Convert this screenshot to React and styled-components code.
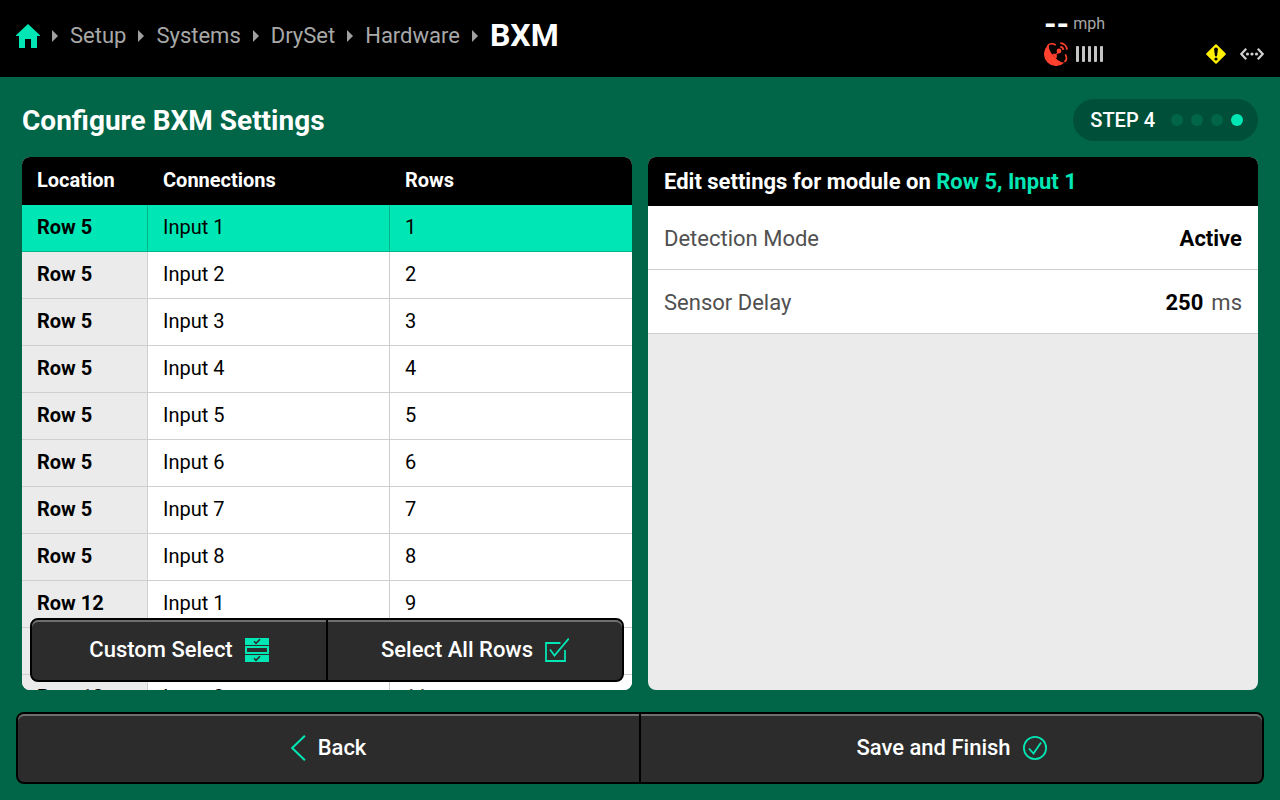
import React, { useState } from 'react'
import styled, { createGlobalStyle } from 'styled-components'

const accent = '#00e6b4'
const green = '#006647'

const crumbs = ['Setup', 'Systems', 'DrySet', 'Hardware']

const modules = [
  { location: 'Row 5', input: 'Input 1' },
  { location: 'Row 5', input: 'Input 2' },
  { location: 'Row 5', input: 'Input 3' },
  { location: 'Row 5', input: 'Input 4' },
  { location: 'Row 5', input: 'Input 5' },
  { location: 'Row 5', input: 'Input 6' },
  { location: 'Row 5', input: 'Input 7' },
  { location: 'Row 5', input: 'Input 8' },
  { location: 'Row 12', input: 'Input 1' },
  { location: 'Row 12', input: 'Input 2' },
  { location: 'Row 12', input: 'Input 3' },
]

const steps = [1, 2, 3, 4]

const HomeIcon = () => (
  <svg width="24" height="24" viewBox="0 0 24 24" fill={accent} aria-hidden="true">
    <path d="M12 0 24 11.2V12h-3v12h-6v-9H9v9H3V12H0v-.8z" />
  </svg>
)

const Separator = () => (
  <svg width="6" height="12" viewBox="0 0 6 12" fill="#a0a0a0" aria-hidden="true">
    <path d="M0 0 6 6 0 12z" />
  </svg>
)

const SatelliteIcon = () => (
  <svg width="24" height="24" viewBox="0 0 24 24" fill="none" stroke="#ff412d" aria-hidden="true">
    <path d="M3.500 3.500A12 12 0 0 0 20.500 20.500C14 20.500 4 9.700 5 3.500z" fill="#ff412d" stroke="none" />
    <path d="M3.600 4.200C5 1.300 8.300 1 11.800 3.100" strokeWidth="1.700" />
    <path d="M21.300 12.400c1.800 3.400 1.700 6-.9 7.400" strokeWidth="1.700" />
    <path d="M8.500 12.500 10 12l2.200.2L14.500 9l1 1-3 2.500v2.500l-.7 1.500z" fill="#ff412d" strokeWidth=".6" />
    <circle cx="15" cy="9" r="2.400" fill="#ff412d" stroke="none" />
    <path d="M16.300 4.800c1.700.1 2.900 1.300 3.100 3M16.300 1.100c3.600.1 6.400 2.900 6.700 6.500" strokeWidth="1.800" />
  </svg>
)

const SignalIcon = () => (
  <svg width="28" height="16" viewBox="0 0 28 16" fill="#c4c4c4" aria-hidden="true">
    {[0, 6, 12, 18, 24].map(x => (
      <rect key={x} x={x} width="3" height="16" rx="1" />
    ))}
  </svg>
)

const WarningIcon = () => (
  <svg width="20" height="20" viewBox="0 0 20 20" aria-hidden="true">
    <path d="M9.300.5Q10-.2 10.700.5L19.500 9.300q.7.700 0 1.400L10.700 19.500q-.7.700-1.400 0L.5 10.700q-.7-.7 0-1.400z" fill="#fff000" />
    <path d="M8.100 5.300a1.900 1.900 0 0 1 3.800 0L11 12.300H9z" fill="#000" />
    <circle cx="10" cy="15" r="1.600" fill="#000" />
  </svg>
)

const ConnectionIcon = () => (
  <svg width="24" height="12" viewBox="0 0 24 12" fill="none" aria-hidden="true">
    <path d="M6.200.8 1.300 6l4.900 5.200M17.800.8 22.700 6l-4.900 5.200" stroke="#d0d0d0" strokeWidth="2.200" />
    <g fill="#d0d0d0">
      <circle cx="7.500" cy="6" r="1.600" />
      <circle cx="12" cy="6" r="1.600" />
      <circle cx="16.500" cy="6" r="1.600" />
    </g>
  </svg>
)

const CustomSelectIcon = () => (
  <svg width="24" height="24" viewBox="0 0 24 24" fill="none" aria-hidden="true">
    <path d="M0 0h24v7H0zM0 17h24v7H0z" fill={accent} />
    <path d="M1 9h22v6H1z" stroke={accent} strokeWidth="2" />
    <path d="m9 3.300 2 2 4-4M9 20.300l2 2 4-4" stroke="#2c2c2c" strokeWidth="1.600" />
  </svg>
)

const SelectAllIcon = () => (
  <svg width="24" height="24" viewBox="0 0 24 24" fill="none" stroke={accent} strokeWidth="1.800" aria-hidden="true">
    <path d="M15.500 5H1v18h19V12" />
    <path d="m5 11.500 4.500 6L23.800.5" />
  </svg>
)

const BackIcon = () => (
  <svg width="15" height="26" viewBox="0 0 15 26" fill="none" stroke={accent} strokeWidth="2" aria-hidden="true">
    <path d="M13.900.7 1.200 13l12.700 12.300" />
  </svg>
)

const FinishIcon = () => (
  <svg width="24" height="24" viewBox="0 0 24 24" fill="none" stroke={accent} aria-hidden="true">
    <circle cx="12" cy="12" r="11.100" strokeWidth="1.800" />
    <path d="m6 12.500 4.500 5 7.500-11" strokeWidth="1.800" />
  </svg>
)

function App() {
  const [selected, setSelected] = useState([0])
  const current = modules[selected[0]]

  return (
    <Screen>
      <GlobalStyle />
      <TopBar>
        <Breadcrumbs aria-label="Breadcrumb">
          <Crumb href="#home" aria-label="Home">
            <HomeIcon />
          </Crumb>
          {crumbs.map(name => (
            <React.Fragment key={name}>
              <Separator />
              <Crumb href={'#' + name.toLowerCase()}>{name}</Crumb>
            </React.Fragment>
          ))}
          <Separator />
          <PageName>BXM</PageName>
        </Breadcrumbs>
        <Status>
          <Gauges>
            <Speed>
              <SpeedValue>--</SpeedValue>
              <SpeedUnit>mph</SpeedUnit>
            </Speed>
            <IconRow $gap="8px">
              <SatelliteIcon />
              <SignalIcon />
            </IconRow>
          </Gauges>
          <IconRow $gap="14px">
            <WarningIcon />
            <ConnectionIcon />
          </IconRow>
        </Status>
      </TopBar>

      <Heading>
        <Title>Configure BXM Settings</Title>
        <StepPill>
          STEP 4
          <Dots>
            {steps.map(n => (
              <Dot key={n} $active={n === 4} />
            ))}
          </Dots>
        </StepPill>
      </Heading>

      <Panels>
        <Panel>
          <TableScroll>
            <Table>
              <thead>
                <tr>
                  <HeadCell $width="126px">Location</HeadCell>
                  <HeadCell>Connections</HeadCell>
                  <HeadCell>Rows</HeadCell>
                </tr>
              </thead>
              <tbody>
                {modules.map((m, i) => (
                  <Row key={i} $selected={selected.includes(i)} onClick={() => setSelected([i])}>
                    <RowHead scope="row">{m.location}</RowHead>
                    <Cell>{m.input}</Cell>
                    <Cell>{i + 1}</Cell>
                  </Row>
                ))}
              </tbody>
            </Table>
          </TableScroll>
          <FloatingGroup>
            <BarButton type="button">
              <Label>Custom Select</Label>
              <CustomSelectIcon />
            </BarButton>
            <BarButton type="button" onClick={() => setSelected(modules.map((m, i) => i))}>
              <Label>Select All Rows</Label>
              <SelectAllIcon />
            </BarButton>
          </FloatingGroup>
        </Panel>

        <Panel>
          <PanelHead>
            Edit settings for module on{' '}
            <Highlight>
              {current.location}, {current.input}
            </Highlight>
          </PanelHead>
          <Setting type="button">
            Detection Mode
            <SettingValue>
              <Value>Active</Value>
            </SettingValue>
          </Setting>
          <Setting type="button">
            Sensor Delay
            <SettingValue>
              <Value>250</Value>
              ms
            </SettingValue>
          </Setting>
        </Panel>
      </Panels>

      <Footer>
        <ButtonGroup $height="72px">
          <BarButton type="button">
            <BackIcon />
            <Label>Back</Label>
          </BarButton>
          <BarButton type="button">
            <Label>Save and Finish</Label>
            <FinishIcon />
          </BarButton>
        </ButtonGroup>
      </Footer>
    </Screen>
  )
}

export default App

const GlobalStyle = createGlobalStyle`
  * {
    box-sizing: border-box;
  }
  body {
    margin: 0;
    background: ${green};
    font-family: Roboto, "Liberation Sans", sans-serif;
  }
  svg {
    display: block;
    flex: none;
  }
`
const Screen = styled.div`
  display: flex;
  flex-direction: column;
  height: 100vh;
  background: ${green};
`
const TopBar = styled.header`
  display: flex;
  justify-content: space-between;
  padding: 12px 16px 11px;
  background: #000;
`
const Breadcrumbs = styled.nav`
  display: flex;
  align-items: center;
  gap: 12px;
  height: 48px;
`
const Crumb = styled.a`
  color: #a8a8a8;
  font-size: 22px;
  line-height: 26px;
  text-decoration: none;
`
const PageName = styled.span`
  padding-bottom: 2px;
  color: #fff;
  font-size: 32px;
  font-weight: 700;
  line-height: 40px;
`
const Status = styled.div`
  display: flex;
  align-items: flex-end;
  justify-content: space-between;
  width: 220px;
`
const Gauges = styled.div`
  display: flex;
  flex-direction: column;
  gap: 6px;
`
const Speed = styled.div`
  display: flex;
  align-items: center;
  gap: 4px;
  height: 24px;
`
const SpeedValue = styled.span`
  color: #fff;
  font-size: 32px;
  font-weight: 700;
  line-height: 24px;
`
const SpeedUnit = styled.span`
  color: #a8a8a8;
  font-size: 16px;
  line-height: 24px;
`
const IconRow = styled.div`
  display: flex;
  align-items: center;
  gap: ${p => p.$gap};
  height: 24px;
`
const Heading = styled.div`
  display: flex;
  align-items: center;
  justify-content: space-between;
  padding: 22px 22px 16px;
`
const Title = styled.h1`
  margin: 0;
  padding-top: 2px;
  color: #fff;
  font-size: 28px;
  font-weight: 700;
  line-height: 40px;
`
const StepPill = styled.div`
  display: flex;
  align-items: center;
  gap: 16px;
  padding: 0 15px 0 17px;
  border-radius: 21px;
  background: #005039;
  color: #fff;
  font-size: 20px;
  font-weight: 500;
  line-height: 42px;
`
const Dots = styled.div`
  display: flex;
  gap: 8px;
`
const Dot = styled.span`
  width: 12px;
  height: 12px;
  border-radius: 50%;
  background: ${p => (p.$active ? accent : green)};
`
const Panels = styled.main`
  display: grid;
  grid-template-columns: 1fr 1fr;
  gap: 16px;
  flex: 1;
  min-height: 0;
  padding: 0 22px;
`
const Panel = styled.section`
  position: relative;
  display: flex;
  flex-direction: column;
  min-height: 0;
  border-radius: 8px;
  background: #ebebeb;
  overflow: hidden;
`
const TableScroll = styled.div`
  flex: 1;
  overflow-y: auto;
  scrollbar-width: none;
`
const Table = styled.table`
  width: 100%;
  table-layout: fixed;
  border-collapse: separate;
  border-spacing: 0;
  font-size: 20px;
  line-height: 24px;
  text-align: left;
`
const HeadCell = styled.th`
  width: ${p => p.$width || 'auto'};
  height: 48px;
  padding: 0 15px 2px;
  background: #000;
  color: #fff;
  font-weight: 700;
`
const Cell = styled.td`
  height: 47px;
  padding: 0 15px 2px;
  border-bottom: 1px solid #cfcfcf;
  border-right: 1px solid #cfcfcf;
  background: #fff;
  color: #000;

  &:last-child {
    border-right: 0;
  }
`
const RowHead = styled(Cell).attrs({ as: 'th' })`
  background: #ebebeb;
  font-weight: 700;
`
const Row = styled.tr`
  cursor: pointer;

  > * {
    ${p => p.$selected && `background: ${accent}; border-color: #00b48c;`}
  }
`
const PanelHead = styled.h2`
  margin: 0;
  padding: 0 16px;
  background: #000;
  color: #fff;
  font-size: 22px;
  font-weight: 700;
  line-height: 49px;
`
const Highlight = styled.span`
  color: ${accent};
`
const Setting = styled.button`
  display: flex;
  align-items: center;
  justify-content: space-between;
  height: 64px;
  padding: 2px 16px 0;
  border: 0;
  border-bottom: 1px solid #cfcfcf;
  background: #fff;
  color: #505050;
  font-family: inherit;
  font-size: 22px;
  cursor: pointer;
`
const SettingValue = styled.span`
  display: flex;
  gap: 8px;
`
const Value = styled.strong`
  color: #000;
  font-weight: 700;
`
const ButtonGroup = styled.div`
  display: flex;
  gap: 2px;
  height: ${p => p.$height};
  border: 2px solid #000;
  border-radius: 8px;
  background: #000;
`
const FloatingGroup = styled(ButtonGroup).attrs({ $height: '64px' })`
  position: absolute;
  right: 8px;
  bottom: 8px;
  left: 8px;
`
const BarButton = styled.button`
  display: flex;
  flex: 1;
  align-items: center;
  justify-content: center;
  gap: 12px;
  border: 0;
  background: #2c2c2c;
  box-shadow: inset 0 2px 0 #6e6e6e;
  color: #fff;
  font-family: inherit;
  font-size: 22px;
  font-weight: 500;
  cursor: pointer;

  &:first-child {
    border-radius: 6px 0 0 6px;
  }
  &:last-child {
    border-radius: 0 6px 6px 0;
  }
`
const Label = styled.span`
  padding-bottom: 2px;
`
const Footer = styled.footer`
  padding: 22px 16px 16px;
`
